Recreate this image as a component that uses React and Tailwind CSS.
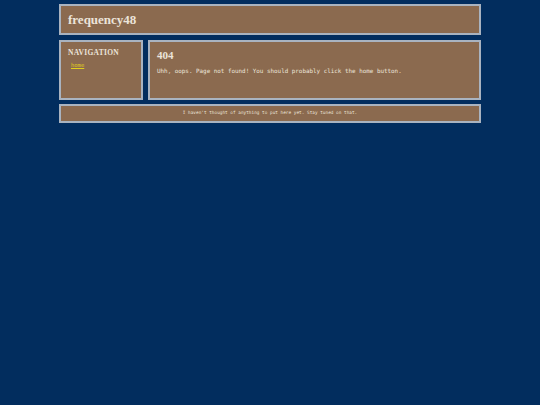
export default function App() {
  return (
    <div className="min-h-screen bg-[#022d5e] pt-[4px]">
      <div className="w-[422px] mx-auto flex flex-col gap-[5px]">
        {/* header */}
        <div className="h-[31px] border-2 border-[#a9b3c0] bg-[#8b6a4f] px-[7px] flex items-center">
          <h1 className="font-['Liberation_Serif',serif] font-bold text-[13px] text-[#ece4da] leading-none">frequency48</h1>
        </div>

        <div className="flex gap-[5px] h-[60px]">
          {/* sidebar */}
          <div className="w-[84px] border-2 border-[#a9b3c0] bg-[#8b6a4f] px-[7px] pt-[7px]">
            <h2 className="font-['Liberation_Serif',serif] font-bold text-[7.5px] text-[#ece4da] leading-none tracking-[0.3px]">NAVIGATION</h2>
            <a href="#" className="block mt-[6px] ml-[3px] font-['DejaVu_Sans_Mono',monospace] text-[5.5px] text-[#e0cf1c] underline leading-none">home</a>
          </div>

          {/* content */}
          <div className="flex-1 border-2 border-[#a9b3c0] bg-[#8b6a4f] px-[7px] pt-[8px]">
            <h2 className="font-['Liberation_Serif',serif] font-bold text-[11px] text-[#ece4da] leading-none">404</h2>
            <p className="mt-[8px] font-['DejaVu_Sans_Mono',monospace] text-[5.9px] text-[#ece4da] leading-none">Uhh, oops. Page not found! You should probably click the home button.</p>
          </div>
        </div>

        {/* footer */}
        <div className="-mt-[1px] h-[19px] border-2 border-[#a9b3c0] bg-[#8b6a4f] flex items-center justify-center">
          <p className="font-['DejaVu_Sans_Mono',monospace] text-[4.4px] text-[#ece4da] leading-none">I haven't thought of anything to put here yet. Stay tuned on that.</p>
        </div>
      </div>
    </div>
  );
}
